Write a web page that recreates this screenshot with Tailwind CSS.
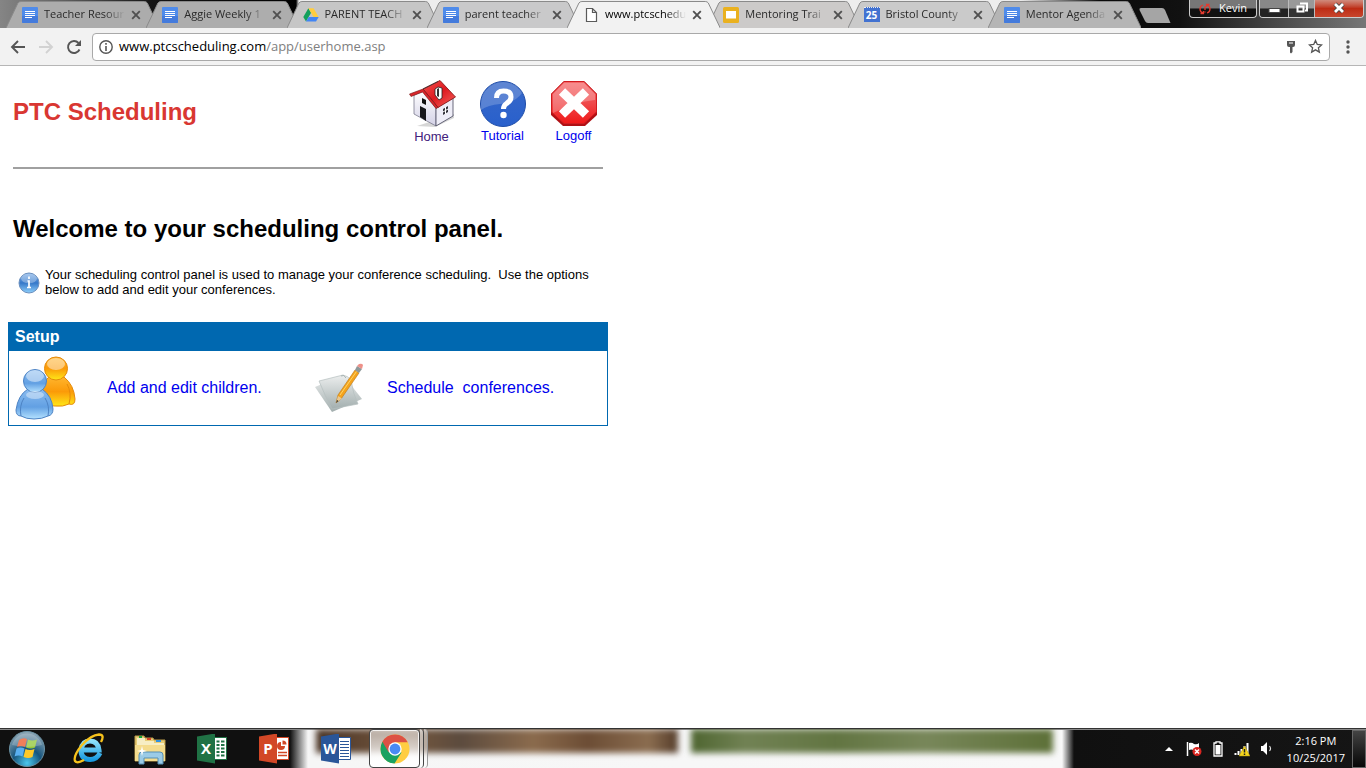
<!DOCTYPE html>
<html lang="en">

<head>
  <meta charset="UTF-8">
  <meta name="viewport" content="width=device-width, initial-scale=1.0">
  <title>PTC Scheduling</title>
  <script src="https://cdn.jsdelivr.net/npm/@tailwindcss/browser@4"></script>
</head>

<body class="flex min-h-screen flex-col bg-white font-['Liberation_Sans',Arial,sans-serif] text-black">

  <!-- Shared symbols -->
  <svg class="hidden">
    <defs>
      <symbol id="doc" viewBox="0 0 16 16">
        <rect width="16" height="16" rx="1" fill="#4f8bea"/>
        <path d="M0 9h16v6q0 1-1 1H1q-1 0-1-1z" fill="#447bdc"/>
        <path d="M3 4.500h10M3 6.500h10M3 8.500h10M3 10.500h7" stroke="#fff"/>
      </symbol>
      <symbol id="close" viewBox="0 0 10 10"><path d="M1.200 1.200l7.600 7.600M8.800 1.200L1.200 8.800" stroke="#505050" stroke-width="1.900"/></symbol>
      <symbol id="tab" viewBox="0 0 154 27" preserveAspectRatio="none">
        <path d="M0 27L12 2Q13 .5 15 .5H139Q141 .5 142 2L154 27" stroke="#8a8a8a"/>
      </symbol>
    </defs>
  </svg>

  <!-- Tab strip -->
  <header class="relative flex h-[28px] bg-[linear-gradient(90deg,#858585_0,#626262_60px,#151515_150px,#000_296px,#ededed_299px,#ededed_1020px,#0a0a0a_1100px,#111_1180px,#555_1300px,#777)] font-['Open_Sans',sans-serif] text-[11px] text-[#2a2a2a]">
    <nav class="flex min-w-0 grow pt-px pl-[6px]">
      <div class="relative -mr-[13px] flex min-w-0 grow basis-0 items-center gap-[6px] pr-[18px] pl-4">
        <svg class="absolute inset-0 size-full fill-[#acacac]"><use href="#tab"/></svg>
        <svg class="relative size-4 shrink-0"><use href="#doc"/></svg>
        <button class="relative min-w-0 grow basis-0 text-left whitespace-nowrap [mask-image:linear-gradient(90deg,#000_75%,transparent)]">Teacher Resour</button>
        <button aria-label="Close" class="relative shrink-0"><svg class="size-[10px]"><use href="#close"/></svg></button>
      </div>
      <div class="relative -mr-[13px] flex min-w-0 grow basis-0 items-center gap-[6px] pr-[18px] pl-4">
        <svg class="absolute inset-0 size-full fill-[#adadad]"><use href="#tab"/></svg>
        <svg class="relative size-4 shrink-0"><use href="#doc"/></svg>
        <button class="relative min-w-0 grow basis-0 text-left whitespace-nowrap [mask-image:linear-gradient(90deg,#000_75%,transparent)]">Aggie Weekly 1</button>
        <button aria-label="Close" class="relative shrink-0"><svg class="size-[10px]"><use href="#close"/></svg></button>
      </div>
      <div class="relative -mr-[13px] flex min-w-0 grow basis-0 items-center gap-[6px] pr-[18px] pl-4">
        <svg class="absolute inset-0 size-full fill-[#c6c6c6]"><use href="#tab"/></svg>
        <svg class="relative size-4 shrink-0" viewBox="0 0 16 16">
          <path d="M5.400 1.200L.3 10l2.700 4.600 5.100-8.800z" fill="#12a05c"/>
          <path d="M5.400 1.200h5.200l5.100 8.800h-5.200z" fill="#ffcd40"/>
          <path d="M5.700 10h10L13 14.600H3z" fill="#4285f4"/>
        </svg>
        <button class="relative min-w-0 grow basis-0 text-left whitespace-nowrap [mask-image:linear-gradient(90deg,#000_75%,transparent)]">PARENT TEACH</button>
        <button aria-label="Close" class="relative shrink-0"><svg class="size-[10px]"><use href="#close"/></svg></button>
      </div>
      <div class="relative -mr-[13px] flex min-w-0 grow basis-0 items-center gap-[6px] pr-[18px] pl-4">
        <svg class="absolute inset-0 size-full fill-[#c9c9ca]"><use href="#tab"/></svg>
        <svg class="relative size-4 shrink-0"><use href="#doc"/></svg>
        <button class="relative min-w-0 grow basis-0 text-left whitespace-nowrap [mask-image:linear-gradient(90deg,#000_75%,transparent)]">parent teacher</button>
        <button aria-label="Close" class="relative shrink-0"><svg class="size-[10px]"><use href="#close"/></svg></button>
      </div>
      <div class="relative z-10 -mr-[13px] flex min-w-0 grow basis-0 items-center gap-[6px] pr-[18px] pl-4 text-black">
        <svg class="absolute inset-0 size-full fill-[#f2f2f2]"><use href="#tab"/></svg>
        <svg class="relative size-4 shrink-0" viewBox="0 0 16 16"><path d="M3.500 1.500h6l4 4v9h-10zM9.500 1.500v4h4" fill="#fff" stroke="#5a5a5a" stroke-width="1.200"/></svg>
        <button class="relative min-w-0 grow basis-0 text-left whitespace-nowrap [mask-image:linear-gradient(90deg,#000_75%,transparent)]">www.ptcschedu</button>
        <button aria-label="Close" class="relative shrink-0"><svg class="size-[10px]"><use href="#close"/></svg></button>
      </div>
      <div class="relative -mr-[13px] flex min-w-0 grow basis-0 items-center gap-[6px] pr-[18px] pl-4">
        <svg class="absolute inset-0 size-full fill-[#cccac9]"><use href="#tab"/></svg>
        <svg class="relative size-4 shrink-0" viewBox="0 0 16 16"><rect width="16" height="16" rx="1.500" fill="#eab11f"/><rect x="3" y="4" width="10" height="7.500" fill="#fff"/></svg>
        <button class="relative min-w-0 grow basis-0 text-left whitespace-nowrap [mask-image:linear-gradient(90deg,#000_75%,transparent)]">Mentoring Trai</button>
        <button aria-label="Close" class="relative shrink-0"><svg class="size-[10px]"><use href="#close"/></svg></button>
      </div>
      <div class="relative -mr-[13px] flex min-w-0 grow basis-0 items-center gap-[6px] pr-[18px] pl-4">
        <svg class="absolute inset-0 size-full fill-[#cacaca]"><use href="#tab"/></svg>
        <span class="relative flex h-[15px] w-4 shrink-0 items-center justify-center border-t border-dotted border-[#eee] bg-[#4272d1] text-[10px] font-bold text-white">25</span>
        <button class="relative min-w-0 grow basis-0 text-left whitespace-nowrap [mask-image:linear-gradient(90deg,#000_75%,transparent)]">Bristol County</button>
        <button aria-label="Close" class="relative shrink-0"><svg class="size-[10px]"><use href="#close"/></svg></button>
      </div>
      <div class="relative flex min-w-0 grow basis-0 items-center gap-[6px] pr-[18px] pl-4">
        <svg class="absolute inset-0 size-full fill-[#b5b5b5]"><use href="#tab"/></svg>
        <svg class="relative size-4 shrink-0"><use href="#doc"/></svg>
        <button class="relative min-w-0 grow basis-0 text-left whitespace-nowrap [mask-image:linear-gradient(90deg,#000_75%,transparent)]">Mentor Agenda</button>
        <button aria-label="Close" class="relative shrink-0"><svg class="size-[10px]"><use href="#close"/></svg></button>
      </div>
    </nav>
    <button aria-label="New tab" class="mt-2 mr-[18px] -ml-[2px] h-[15px] w-8 shrink-0 self-start">
      <svg class="size-full" viewBox="0 0 32 15"><path d="M2 0H23Q25 0 26 2L31.500 15H9Q7 15 6 13L.5 2Q0 0 2 0z" fill="#a5a5a5"/></svg>
    </button>
    <button class="flex h-[18px] w-[68px] shrink-0 items-center justify-center gap-2 rounded-b border border-t-0 border-[#ccc] bg-linear-to-b from-[#777] from-45% to-[#111] to-55% text-[11px] text-white">
      <svg class="size-3" viewBox="0 0 12 12"><path d="M4 2Q1 3 1 6t3 4M1.500 10.500H4.500V8M8 10q3-1 3-4t-3-4M10.500 1.500H7.500V4M6 3v4M6 8.500v1" fill="none" stroke="#e33b30" stroke-width="1.300"/></svg>
      Kevin
    </button>
    <div class="mr-[2px] ml-[2px] flex h-[18px] w-[105px] shrink-0 overflow-hidden rounded-b border border-t-0 border-[#ccc]">
      <button aria-label="Minimize" class="flex w-[29px] justify-center border-r border-[#bbb] bg-linear-to-b from-[#888] from-45% to-[#222] to-55%">
        <svg class="size-[18px]" viewBox="0 0 18 18"><rect x="4" y="8.500" width="11" height="4" fill="#fff" stroke="#444"/></svg>
      </button>
      <button aria-label="Restore" class="flex w-[26px] justify-center border-r border-[#bbb] bg-linear-to-b from-[#999] from-45% to-[#333] to-55%">
        <svg class="size-[18px]" viewBox="0 0 18 18"><path d="M7 3.500h7v7h-2M4.500 6.500h6v5h-6z" fill="none" stroke="#fff" stroke-width="2"/></svg>
      </button>
      <button aria-label="Close window" class="flex grow justify-center bg-linear-to-b from-[#cf8a7c] from-0% via-[#bd2c14] via-50% to-[#c8452c]">
        <svg class="size-[18px]" viewBox="0 0 18 18"><path d="M5 4l8 8M13 4l-8 8" stroke="#444" stroke-width="4.500"/><path d="M5 4l8 8M13 4l-8 8" stroke="#fff" stroke-width="2.800"/></svg>
      </button>
    </div>
  </header>

  <!-- Toolbar -->
  <div class="flex h-[38px] items-center border-b border-[#b6b6b6] bg-[#f2f2f2] pl-[10px]">
    <button aria-label="Back" class="mr-3"><svg class="size-4" viewBox="0 0 16 16"><path d="M15 8H2.500M8 2L2 8l6 6" fill="none" stroke="#555" stroke-width="1.900"/></svg></button>
    <button aria-label="Forward" class="mr-3"><svg class="size-4" viewBox="0 0 16 16"><path d="M1 8h12.500M8 2l6 6-6 6" fill="none" stroke="#d2d2d2" stroke-width="1.900"/></svg></button>
    <button aria-label="Reload" class="mr-[10px]"><svg class="size-4" viewBox="0 0 16 16"><path d="M13.500 10.500A6 6 0 1 1 12.500 4" fill="none" stroke="#555" stroke-width="1.900"/><path d="M15 1v6H9z" fill="#555"/></svg></button>
    <div class="flex h-7 min-w-0 grow items-center rounded-sm border border-[#a9a9a9] bg-white px-[6px] font-['Open_Sans',sans-serif]">
      <svg class="mr-[6px] size-[14px] shrink-0" viewBox="0 0 14 14"><circle cx="7" cy="7" r="6.200" fill="none" stroke="#555" stroke-width="1.400"/><path d="M7 3v1.700M7 6v5" stroke="#555" stroke-width="1.600"/></svg>
      <a href="#" class="grow pt-px text-[13px] text-[#808080]"><span class="text-black">www.ptcscheduling.com</span>/app/userhome.asp</a>
      <button aria-label="Saved password" class="mr-[10px]"><svg class="size-[14px]" viewBox="0 0 14 14"><path d="M3 1h8v4q0 2-2 2H8.500v5L7 13.500 6 12.500V7H5Q3 7 3 5z" fill="#555"/><path d="M5 3h4" stroke="#fff"/></svg></button>
      <button aria-label="Bookmark this page"><svg class="size-[15px]" viewBox="0 0 16 16"><path d="M8 1.500l1.900 4.300 4.700.5-3.500 3.100 1 4.600L8 11.600 3.900 14l1-4.600L1.400 6.300l4.700-.5z" fill="none" stroke="#555" stroke-width="1.400"/></svg></button>
    </div>
    <button aria-label="Menu" class="mr-[10px] ml-[10px]"><svg class="size-4" viewBox="0 0 16 16" fill="#555"><circle cx="8" cy="3" r="1.700"/><circle cx="8" cy="8" r="1.700"/><circle cx="8" cy="13" r="1.700"/></svg></button>
  </div>

  <!-- Page -->
  <main class="grow px-2">
    <div class="w-full max-w-[600px]">
      <div class="mx-[5px] flex h-[103px] justify-between border-b-2 border-[#a0a0a0] pt-[14px]">
        <h1 class="mt-4 text-[24px] leading-8 font-bold text-[#d93732]">PTC Scheduling</h1>
        <nav class="flex gap-[22px] pr-[5px] text-[13px] leading-4 text-[#0000ee]">
          <a href="#" class="flex w-[49px] flex-col items-center text-[#42217b]">
            <svg class="size-12" viewBox="0 0 48 48">
              <defs>
                <linearGradient id="wall" x1="0" y1="0" x2="0" y2="1"><stop offset="0" stop-color="#fff"/><stop offset="1" stop-color="#d3d1e6"/></linearGradient>
                <linearGradient id="roof" x1="0" y1="0" x2="1" y2="1"><stop offset="0" stop-color="#f5514d"/><stop offset=".5" stop-color="#dd1a20"/><stop offset="1" stop-color="#f8645e"/></linearGradient>
              </defs>
              <path d="M9 46l18 1 19-9v-4z" fill="#999" opacity=".4"/>
              <path d="M6 15L16 11 28 28V46L6 34z" fill="url(#wall)" stroke="#6b6b80" stroke-width=".7"/>
              <path d="M28 28L45 18V36L28 46z" fill="#eeedf7" stroke="#44445a" stroke-width=".8"/>
              <path d="M15 9L32 .5 47.500 17 30 27.500z" fill="url(#roof)" stroke="#7d1010" stroke-width=".8"/>
              <path d="M15 9L1.500 14 3 16.500 14.500 12 28 28.500 30 27.500z" fill="#d9252a" stroke="#6e1010" stroke-width=".6"/>
              <path d="M15 9L30 1.500" stroke="#333" stroke-width=".8"/>
              <path d="M27 9l3-2 4 1v10l-3 2-4-5z" fill="#fff" stroke="#222" stroke-width=".8"/><path d="M29 9l2-1v9l-2-1z" fill="#333"/>
              <path d="M12 26l6 3v12l-6-4z" fill="#17171b"/><path d="M14 18l4 2v5l-4-2z" fill="#111"/>
              <path d="M35 29l5-3v6l-5 3z" fill="#34343c"/><path d="M37.500 27v7M35 32l5-3" stroke="#fff"/>
            </svg>
            <span class="pt-px">Home</span>
          </a>
          <a href="#" class="flex w-[49px] flex-col items-center">
            <svg class="size-12" viewBox="0 0 48 48">
              <defs><linearGradient id="help" x1="0" y1="0" x2="0" y2="1"><stop offset="0" stop-color="#3768c8"/><stop offset="1" stop-color="#2960cc"/></linearGradient></defs>
              <circle cx="24" cy="24" r="22.500" fill="url(#help)" stroke="#1f4da8"/>
              <path d="M2 25A22 22 0 0 1 43 13Q36 23 21 24 9 25 2 30z" fill="#fff" opacity=".2"/>
              <path d="M17.500 18q0-7 7-7 7.500 0 7.500 6 0 4-4.500 6.500Q24.500 25.500 24.500 29" fill="none" stroke="#fff" stroke-width="5"/>
              <circle cx="24.500" cy="35" r="3.200" fill="#fff"/>
            </svg>
            Tutorial
          </a>
          <a href="#" class="flex w-[49px] flex-col items-center">
            <svg class="size-12" viewBox="0 0 48 48">
              <defs><linearGradient id="stop" x1="0" y1="0" x2="0" y2="1"><stop offset="0" stop-color="#f5696a"/><stop offset=".5" stop-color="#ef4a4c"/><stop offset="1" stop-color="#f01818"/></linearGradient></defs>
              <path d="M14 1H34L47 14V35L35 46H13L1 35V14z" fill="#b01014"/>
              <path d="M14 1.500H34L46.500 14V32L34 43.500H14L1.500 32V14z" fill="url(#stop)" stroke="#d11c20"/>
              <path d="M14 3H34L45 14V20Q25 22 3 33V14z" fill="#fff" opacity=".25"/>
              <path d="M12 11.500l24 23M36 11.500l-24 23" stroke="#fff" stroke-width="9"/>
            </svg>
            Logoff
          </a>
        </nav>
      </div>

      <h2 class="mx-[5px] mt-11 text-[24px] leading-8 font-bold">Welcome to your scheduling control panel.</h2>

      <div class="mt-[22px] flex items-center gap-[5px] px-[10px]">
        <svg class="mt-[2px] size-[22px] shrink-0" viewBox="0 0 22 22">
          <defs><linearGradient id="info" x1="0" y1="0" x2="0" y2="1"><stop offset="0" stop-color="#82b2e9"/><stop offset=".5" stop-color="#3578c9"/><stop offset="1" stop-color="#8fd0fb"/></linearGradient></defs>
          <circle cx="11" cy="11" r="10" fill="url(#info)" stroke="#6a8fbe"/>
          <ellipse cx="11" cy="6.500" rx="8" ry="4.800" fill="#fff" opacity=".3"/>
          <path d="M11 4.500v2.500M9.500 9H11v6.500M9 15.500h4" fill="none" stroke="#fff" stroke-width="1.700"/>
        </svg>
        <p class="text-[13px] leading-[15px]">Your scheduling control panel is used to manage your conference scheduling.&nbsp; Use the options below to add and edit your conferences.</p>
      </div>

      <section class="mt-[25px] border border-[#0068b0]">
        <h3 class="bg-[#0068b0] px-[6px] py-[2px] text-[16px] leading-6 font-bold text-white">Setup</h3>
        <div class="flex h-[74px] items-center pl-[6px] text-[16px] text-[#0000ee]">
          <a href="#" class="flex w-[295px] items-center gap-7">
            <svg class="size-16 shrink-0" viewBox="0 0 64 64">
              <defs>
                <linearGradient id="gold" x1="0" y1="0" x2="0" y2="1"><stop offset="0" stop-color="#ffb52e"/><stop offset=".5" stop-color="#fb9a08"/><stop offset="1" stop-color="#ffe818"/></linearGradient>
                <linearGradient id="sky" x1="0" y1="0" x2="0" y2="1"><stop offset="0" stop-color="#8abcf0"/><stop offset=".6" stop-color="#62a0e3"/><stop offset="1" stop-color="#b5e2ff"/></linearGradient>
              </defs>
              <g fill="url(#gold)" stroke="#e58a0a">
                <path d="M34 21H49Q59 29 60 43 60 50 54 48 48 51 40 50 30 50 24 45 22 30 34 21z"/>
                <path d="M52 28q5 9 2 20" fill="none"/>
                <circle cx="41" cy="12.500" r="11.500"/>
              </g>
              <ellipse cx="41" cy="8" rx="9" ry="6" fill="#fff" opacity=".45"/>
              <g fill="url(#sky)" stroke="#4d83c4">
                <path d="M13 33H27Q37 40 38 53 38 59 33 60 27 63 19 63 11 63 6 60 1 60 1 54 3 39 13 33z"/>
                <path d="M9 42q-5 8-3 18M30 42q5 8 3 18" fill="none"/>
                <circle cx="20" cy="25" r="11.500"/>
              </g>
              <ellipse cx="20" cy="20" rx="9" ry="6" fill="#fff" opacity=".45"/>
              <ellipse cx="20" cy="39" rx="9" ry="4" fill="#fff" opacity=".4"/>
            </svg>
            Add and edit children.
          </a>
          <a href="#" class="flex items-center gap-[13px]">
            <svg class="size-16 shrink-0" viewBox="0 0 64 64">
              <defs><linearGradient id="sheet" x1="0" y1="0" x2="0" y2="1"><stop offset="0" stop-color="#eceeee"/><stop offset="1" stop-color="#a3afaf"/></linearGradient></defs>
              <path d="M5 31l28-12 19 24-30 13z" fill="url(#sheet)"/>
              <path d="M9 25l24-6q5 1 8 5 2 14 7 24l-26 5q-7-13-13-28z" fill="url(#sheet)" stroke="#b4bebe" stroke-width=".7"/>
              <path d="M31 20q3-2 5 2" fill="none" stroke="#9ba8a8" stroke-width=".8"/>
              <path d="M26 47l2-8L45 14l4 3-18 26z" fill="#f5a31c" stroke="#b87515" stroke-width=".6"/>
              <path d="M30 39L46.500 15.500" stroke="#ffd565"/><path d="M26 47l2-7 4 2.500z" fill="#e8c893"/><path d="M26 47l1-3 1.500 1z" fill="#333"/>
              <path d="M45 14l2-4 5 3-3 4z" fill="#8e9899"/><path d="M47 10l2-2q3-1 4 1l-1 4z" fill="#ee9189"/>
            </svg>
            <span>Schedule&nbsp; conferences.</span>
          </a>
        </div>
      </section>
    </div>
  </main>

  <!-- Taskbar -->
  <footer class="relative flex h-10 items-center overflow-hidden border-t border-[#333] bg-[linear-gradient(90deg,#101010_0,#101010_290px,#f6f6f6_308px,#f8f8f8_1062px,#101010_1074px,#151515)] font-['Open_Sans',sans-serif] text-white shadow-[inset_0_1px_0_#888]">
    <div class="absolute top-0 left-[316px] h-6 w-[362px] bg-[linear-gradient(90deg,#4b3526,#76583f_25%,#5c4b3e_40%,#8b6b4d_60%,#6c4d35_75%,#8b6d50_92%,#543c2a)] blur-[3px]"></div>
    <div class="absolute top-0 left-[691px] h-6 w-[362px] bg-[linear-gradient(90deg,#4e6530,#718254_15%,#627542_40%,#78875a_65%,#5d7038)] blur-[3px]"></div>

    <button aria-label="Start" class="relative ml-2 shrink-0">
      <svg class="size-[38px]" viewBox="0 0 38 38">
        <defs><radialGradient id="orb" cx=".5" cy=".9" r=".9"><stop offset="0" stop-color="#4cc8ee"/><stop offset=".45" stop-color="#17557d"/><stop offset="1" stop-color="#93aab8"/></radialGradient></defs>
        <circle cx="19" cy="19" r="17.500" fill="url(#orb)" stroke="#6a91a3"/>
        <path d="M11 10q4-3 8-1l-2 8q-4-2-8 0z" fill="#ed5b2d"/><path d="M20 9.500q4 2 9 0l-2 8q-4 2-9 0z" fill="#94c83d"/>
        <path d="M8.500 18.500q4-2 8 0l-2 8q-4-2-8 0z" fill="#5aaff0"/><path d="M17.500 19q4 2 9 0l-2 8q-4 2-9 0z" fill="#ffc927"/>
        <path d="M4 15A15.500 15.500 0 0 1 34 15Q19 19 4 15z" fill="#fff" opacity=".22"/>
      </svg>
    </button>
    <button aria-label="Internet Explorer" class="relative ml-[27px] shrink-0">
      <svg class="size-8" viewBox="0 0 32 32">
        <defs><linearGradient id="ie" x1="0" y1="0" x2="0" y2="1"><stop offset="0" stop-color="#8ee2fb"/><stop offset="1" stop-color="#1a9be0"/></linearGradient></defs>
        <path d="M27 20Q24 26.500 17 26.500 8 26.500 8 17 9 8 17 8 25 8 26 17H10" fill="none" stroke="url(#ie)" stroke-width="5"/>
        <path d="M28 9Q32 1.500 26 1.500 18 2 9 12 0 23 2 28 4 31 11 27" fill="none" stroke="#f6c21c" stroke-width="2.300"/>
      </svg>
    </button>
    <button aria-label="File Explorer" class="relative ml-[29px] shrink-0">
      <svg class="size-8" viewBox="0 0 32 32">
        <path d="M1 3h9l1 2h8l1 2h11v21H1z" fill="#e8cd76" stroke="#b99a4a"/><path d="M3 5h8v3h9v2h10v5H3z" fill="#f7eec4"/>
        <path d="M5 4h3" stroke="#19a63c" stroke-width="2"/><path d="M13 6h4" stroke="#d94128" stroke-width="2"/><path d="M22 8h5" stroke="#2d91e2" stroke-width="2"/>
        <path d="M1 12h30v16H1z" fill="#f4dc8d"/>
        <path d="M5 31V22q0-3 3-3h18q3 0 3 3v9h-5v-6H10v6z" fill="#9bcbe6" stroke="#558fb5"/>
        <path d="M8 13l1 4 4 1-4 1-1 4-1-4-4-1 4-1z" fill="#fff"/>
      </svg>
    </button>
    <button aria-label="Excel" class="relative ml-[31px] flex shrink-0 items-center">
      <span class="flex h-[30px] w-[18px] items-center justify-center bg-[#207245] text-[15px] font-bold [clip-path:polygon(0_10%,100%_0,100%_100%,0_90%)]">X</span>
      <svg class="h-[23px] w-3" viewBox="0 0 12 23"><path d="M0 .5h11.500v22H0" fill="#fff" stroke="#207245"/><path d="M1.500 4.500h3m1.500 0h3.500m-8 3.500h3m1.500 0h3.500m-8 3.500h3m1.500 0h3.500m-8 3.500h3m1.500 0h3.500m-8 3.500h3m1.500 0h3.500" stroke="#207245" stroke-width="2"/></svg>
    </button>
    <button aria-label="PowerPoint" class="relative ml-8 flex shrink-0 items-center">
      <span class="flex h-[30px] w-[18px] items-center justify-center bg-[#d24726] text-[15px] font-bold [clip-path:polygon(0_10%,100%_0,100%_100%,0_90%)]">P</span>
      <svg class="h-[23px] w-3" viewBox="0 0 12 23"><path d="M0 .5h11.500v22H0" fill="#fff" stroke="#d24726"/><path d="M4 5a4 4 0 1 0 4 4H4z" fill="#d24726"/><path d="M5.500 3.500a4 4 0 0 1 4 4h-4z" fill="#d24726"/><path d="M1 15.500h9M1 18.500h9" stroke="#d24726" stroke-width="1.500"/></svg>
    </button>
    <button aria-label="Word" class="relative ml-8 flex shrink-0 items-center">
      <span class="flex h-[30px] w-[18px] items-center justify-center bg-[#2a5699] text-[14px] font-bold [clip-path:polygon(0_10%,100%_0,100%_100%,0_90%)]">W</span>
      <svg class="h-[23px] w-3" viewBox="0 0 12 23"><path d="M0 .5h11.500v22H0" fill="#fff" stroke="#2a5699"/><path d="M1 4.500h9M1 7.500h9M1 10.500h9M1 13.500h9M1 16.500h9M1 19.500h9" stroke="#2a5699"/></svg>
    </button>
    <button aria-label="Google Chrome" class="relative ml-[18px] flex h-[39px] w-[51px] shrink-0 items-center justify-center rounded-sm border border-[#444] bg-linear-to-b from-white/50 to-white/95 inset-ring inset-ring-white/80">
      <svg class="size-[30px]" viewBox="0 0 30 30">
        <circle cx="15" cy="15" r="14.500" fill="#ffcd42"/>
        <path d="M15 15L2.400 7.800A14.500 14.500 0 0 0 14.500 29.500L21.500 18.500z" fill="#1ba261"/>
        <path d="M2.400 7.800A14.500 14.500 0 0 1 27.700 8.200H15L8.500 18z" fill="#dd5144"/>
        <circle cx="15" cy="15" r="6.700" fill="#fff"/><circle cx="15" cy="15" r="5.400" fill="#4a8af4"/>
      </svg>
    </button>
    <div class="relative h-[39px] w-1 shrink-0 rounded-r-sm border-r border-[#444] bg-white/60"></div>
    <div class="relative h-[39px] w-1 shrink-0 rounded-r-sm border-r border-[#999] bg-white/50"></div>

    <!-- Notification area -->
    <div class="relative ml-auto flex h-full shrink-0 items-center">
      <button aria-label="Show hidden icons" class="mr-[13px]"><svg class="h-1 w-2" viewBox="0 0 8 4"><path d="M0 4l4-4 4 4z" fill="#fff"/></svg></button>
      <button aria-label="Action Center" class="mr-[11px]"><svg class="size-4" viewBox="0 0 16 16"><path d="M1.500 1v14" stroke="#fff" stroke-width="1.500"/><path d="M3 2q3-1 5 1 3 1 5-1v7q-3 2-5 0-3-1-5 0z" fill="#fff"/><circle cx="11" cy="10.500" r="4.500" fill="#d92520"/><path d="M9 8.500l4 4m0-4l-4 4" stroke="#fff" stroke-width="1.500"/></svg></button>
      <button aria-label="Battery" class="mr-[11px]"><svg class="h-4 w-[10px]" viewBox="0 0 10 16"><path d="M3 2V.8h4V2h2v13H1V2z" fill="none" stroke="#fff" stroke-width="1.300"/><path d="M2.500 4h5v9.500h-5z" fill="#fff"/></svg></button>
      <button aria-label="Network" class="mr-[11px]"><svg class="size-4" viewBox="0 0 16 16"><path d="M1.500 14v-2M4.500 14v-4M7.500 14V8M10.500 14V5M13.500 14V2" stroke="#fff" stroke-width="2"/><path d="M10.500 5L16 15H5z" fill="#f5d51c" stroke="#aa9008" stroke-width=".5"/><path d="M10.500 8v3.500m0 1v1.500" stroke="#222" stroke-width="1.500"/></svg></button>
      <button aria-label="Volume" class="mr-[14px]"><svg class="h-4 w-3" viewBox="0 0 12 16"><path d="M0 5h2l4-4v13l-4-4H0z" fill="#fff"/><path d="M8.500 5q2 2.500 0 5" fill="none" stroke="#ddd" stroke-width="1.200"/></svg></button>
      <time class="mr-[7px] text-center text-[11px] leading-[17px]">2:16 PM<br>10/25/2017</time>
      <button aria-label="Show desktop" class="h-[38px] w-[14px] border border-[#666] bg-linear-to-b from-[#444] to-[#080808]"></button>
    </div>
  </footer>
</body>

</html>
